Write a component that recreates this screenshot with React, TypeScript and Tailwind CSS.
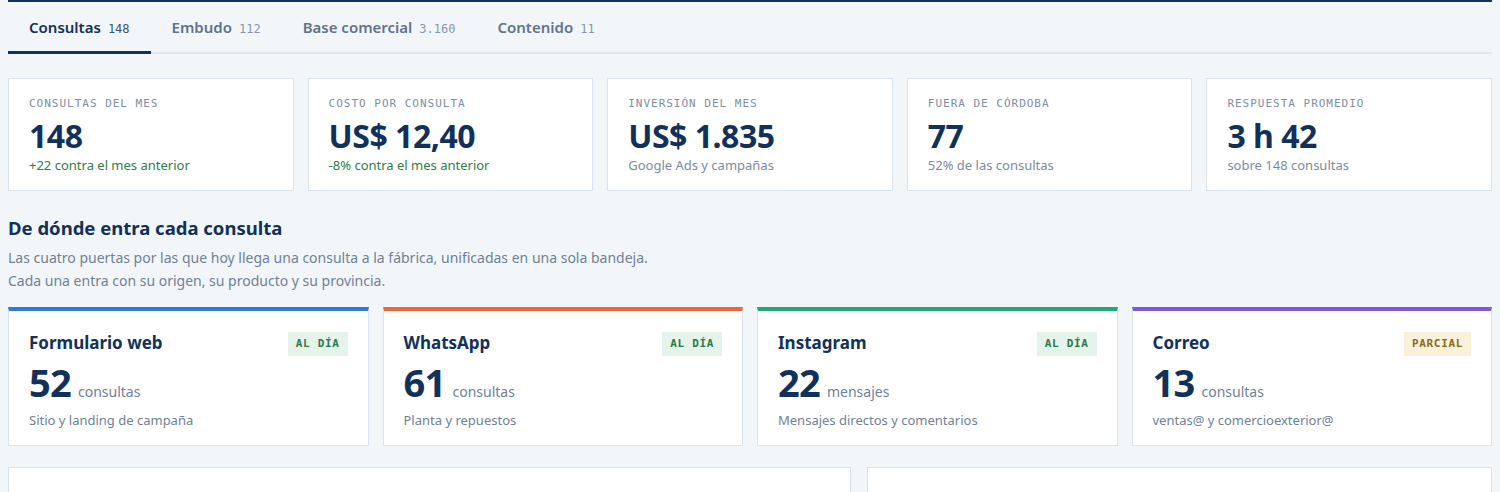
import React from "react";

const sans = "font-['Noto_Sans','Open_Sans',sans-serif]";
const mono = "font-['DejaVu_Sans_Mono','Liberation_Mono',monospace]";

const tabs = [
  { label: "Consultas", count: "148", active: true },
  { label: "Embudo", count: "112" },
  { label: "Base comercial", count: "3.160" },
  { label: "Contenido", count: "11" },
];

const kpis = [
  { label: "Consultas del mes", value: "148", sub: "+22 contra el mes anterior", good: true },
  { label: "Costo por consulta", value: "US$ 12,40", sub: "-8% contra el mes anterior", good: true },
  { label: "Inversión del mes", value: "US$ 1.835", sub: "Google Ads y campañas" },
  { label: "Fuera de Córdoba", value: "77", sub: "52% de las consultas" },
  { label: "Respuesta promedio", value: "3 h 42", sub: "sobre 148 consultas" },
];

const channels = [
  { name: "Formulario web", value: "52", unit: "consultas", sub: "Sitio y landing de campaña", bar: "border-t-[#2f7bd0]", status: "AL DÍA", ok: true },
  { name: "WhatsApp", value: "61", unit: "consultas", sub: "Planta y repuestos", bar: "border-t-[#e8693c]", status: "AL DÍA", ok: true },
  { name: "Instagram", value: "22", unit: "mensajes", sub: "Mensajes directos y comentarios", bar: "border-t-[#22a874]", status: "AL DÍA", ok: true },
  { name: "Correo", value: "13", unit: "consultas", sub: "ventas@ y comercioexterior@", bar: "border-t-[#7f5ad6]", status: "PARCIAL", ok: false },
];

export default function App() {
  return (
    <div className={`min-h-screen bg-[#f3f6f9] px-2 ${sans}`}>
      {/* pestañas */}
      <div className="flex border-t-2 border-t-[#143158] border-b-2 border-b-[#dfe6ee]">
        {tabs.map((t) => (
          <div
            key={t.label}
            className={`-mb-[2px] flex items-baseline gap-[7px] px-[21px] pt-[13px] pb-[12px] border-b-[3px] ${
              t.active ? "border-b-[#143158]" : "border-b-transparent"
            }`}
          >
            <span className={`text-[15px] leading-6 font-semibold ${t.active ? "text-[#143158]" : "text-[#60738c]"}`}>
              {t.label}
            </span>
            <span className={`${mono} text-[12px] ${t.active ? "text-[#3d5270]" : "text-[#8696aa]"}`}>{t.count}</span>
          </div>
        ))}
      </div>

      {/* indicadores */}
      <div className="mt-6 grid grid-cols-5 gap-3.5">
        {kpis.map((k) => (
          <div key={k.label} className="bg-white border border-[#d9e3ee] pt-[17px] px-5 pb-[15px]">
            <div className={`${mono} text-[11px] leading-4 uppercase tracking-[0.09em] text-[#7d8ea3]`}>{k.label}</div>
            <div className="mt-[6px] text-[32px] leading-9 font-bold text-[#12315a] tracking-[-0.015em]">{k.value}</div>
            <div className={`mt-[1px] text-[13px] leading-5 ${k.good ? "text-[#2f7d4a]" : "text-[#7a8ba0]"}`}>{k.sub}</div>
          </div>
        ))}
      </div>

      {/* canales */}
      <h2 className="mt-[23px] text-[18.5px] leading-7 font-bold text-[#12315a]">De dónde entra cada consulta</h2>
      <p className="mt-1 text-[14px] leading-[23px] text-[#6f8197]">
        Las cuatro puertas por las que hoy llega una consulta a la fábrica, unificadas en una sola bandeja.
        <br />
        Cada una entra con su origen, su producto y su provincia.
      </p>

      <div className="mt-[15px] grid grid-cols-4 gap-3.5">
        {channels.map((c) => (
          <div key={c.name} className={`bg-white border border-[#d9e3ee] border-t-4 ${c.bar} pt-5 px-5 pb-[15px]`}>
            <div className="flex items-start justify-between">
              <div className="text-[17px] leading-6 font-bold text-[#12315a]">{c.name}</div>
              <span
                className={`${mono} mt-[1px] px-2 text-[11px] leading-6 font-bold tracking-[0.06em] ${
                  c.ok ? "bg-[#e6f3eb] text-[#2a7a4c]" : "bg-[#fbf0d9] text-[#8a6a1c]"
                }`}
              >
                {c.status}
              </span>
            </div>
            <div className="mt-[6px] flex items-baseline gap-[7px]">
              <span className="text-[38px] leading-10 font-bold text-[#12315a] tracking-[-0.02em]">{c.value}</span>
              <span className="text-[14px] text-[#6f8197]">{c.unit}</span>
            </div>
            <div className="mt-[8px] text-[13px] leading-5 text-[#6f8197]">{c.sub}</div>
          </div>
        ))}
      </div>

      {/* paneles inferiores */}
      <div className="mt-[21px] grid grid-cols-[1.35fr_1fr] gap-4">
        <div className="h-[220px] bg-white border border-[#d9e3ee]" />
        <div className="h-[220px] bg-white border border-[#d9e3ee]" />
      </div>
    </div>
  );
}
